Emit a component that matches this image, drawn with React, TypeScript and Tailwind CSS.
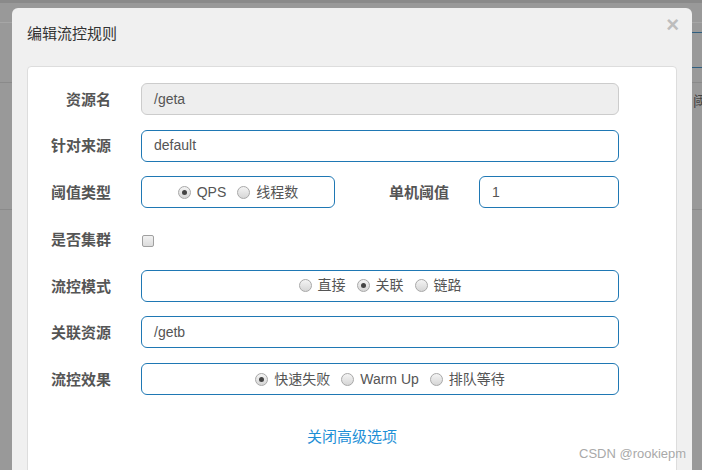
import React from 'react';

const cjk = { fontFamily: '"Liberation Sans", Arial, "Noto Sans CJK SC", sans-serif' };

const Radio = ({ checked }: { checked?: boolean }) => (
  <span className="inline-flex h-[13px] w-[13px] items-center justify-center rounded-full border border-[#a8a8a8] bg-gradient-to-b from-[#f4f4f4] to-[#d6d6d6]">
    {checked && <span className="h-[5px] w-[5px] rounded-full bg-[#444]" />}
  </span>
);

const RadioGroup = ({ items, active }: { items: string[]; active: number }) => (
  <div className="flex items-center gap-[11px] text-[14px] text-[#555]">
    {items.map((t, i) => (
      <label key={t} className="flex items-center gap-[6px]">
        <Radio checked={i === active} />
        <span>{t}</span>
      </label>
    ))}
  </div>
);

const Label = ({ children }: { children: React.ReactNode }) => (
  <div className="w-[83px] shrink-0 translate-y-[1px] text-right text-[15px] font-bold text-[#555]">{children}</div>
);

// input-like box; disabled one is grey
const Box = ({
  children,
  className = '',
  disabled,
}: {
  children?: React.ReactNode;
  className?: string;
  disabled?: boolean;
}) => (
  <div
    className={`flex h-[32px] items-center rounded-[6px] border px-[12px] text-[14px] text-[#555] ${
      disabled ? 'border-[#ccc] bg-[#eeeeee]' : 'border-[#1f78b4] bg-white'
    } ${className}`}
  >
    {children}
  </div>
);

export default function App() {
  return (
    <div className="relative h-[470px] w-[702px] overflow-hidden bg-[#999]" style={cjk}>
      {/* page behind the overlay */}
      <div className="h-[3px] bg-[#8a8a8a]" />
      <div className="absolute left-0 right-0 top-[22px] h-px bg-[#a6a6a6]" />
      <div className="absolute left-0 right-0 top-[82px] h-px bg-[#8a8a8a]" />
      <div className="absolute left-0 right-0 top-[209px] h-px bg-[#8a8a8a]" />
      <div className="absolute right-0 top-[32px] h-px w-[20px] bg-[#2f5f80]" />
      <div className="absolute right-0 top-[67px] h-px w-[20px] bg-[#2f5f80]" />
      <div className="absolute left-[693px] top-[91px] text-[14px] text-[#444]">阈</div>

      {/* modal */}
      <div className="absolute left-[12px] top-[8px] h-[480px] w-[680px] rounded-[6px] bg-[#f0f0f0]">
        <div className="flex h-[58px] items-start px-[15px] pt-[16px]">
          <h4 className="text-[15px] leading-[20px] text-[#333]">编辑流控规则</h4>
        </div>
        <button className="absolute right-[13px] top-[6px] text-[22px] font-bold leading-[22px] text-[#bdbdbd]">×</button>

        <div className="mx-[15px] h-[420px] rounded-[4px] border border-[#ddd] bg-white pt-[16px]">
          <div className="flex flex-col gap-[14.7px]">
            <div className="flex items-center gap-[30px]">
              <Label>资源名</Label>
              <Box disabled className="w-[478px]">/geta</Box>
            </div>
            <div className="flex items-center gap-[30px]">
              <Label>针对来源</Label>
              <Box className="w-[478px]">default</Box>
            </div>
            <div className="flex items-center">
              <Label>阈值类型</Label>
              <Box className="ml-[30px] w-[194px] justify-center">
                <RadioGroup items={['QPS', '线程数']} active={0} />
              </Box>
              <div className="ml-[31px]">
                <Label>单机阈值</Label>
              </div>
              <Box className="ml-[30px] w-[140px]">1</Box>
            </div>
            <div className="flex h-[32px] items-center gap-[31px]">
              <Label>是否集群</Label>
              <span className="h-[12px] w-[12px] translate-y-[2px] rounded-[2px] border border-[#a0a0a0] bg-gradient-to-b from-[#f2f2f2] to-[#dcdcdc]" />
            </div>
            <div className="flex items-center gap-[30px]">
              <Label>流控模式</Label>
              <Box className="w-[478px] justify-center">
                <RadioGroup items={['直接', '关联', '链路']} active={1} />
              </Box>
            </div>
            <div className="flex items-center gap-[30px]">
              <Label>关联资源</Label>
              <Box className="w-[478px]">/getb</Box>
            </div>
            <div className="flex items-center gap-[30px]">
              <Label>流控效果</Label>
              <Box className="w-[478px] justify-center">
                <RadioGroup items={['快速失败', 'Warm Up', '排队等待']} active={0} />
              </Box>
            </div>
          </div>
          <div className="mt-[30px] text-center">
            <a className="cursor-pointer text-[15px] leading-[20px] text-[#1e8fd6]">关闭高级选项</a>
          </div>
        </div>
      </div>

      <div className="absolute left-[579px] top-[444px] text-[13px] text-[#a9a9a9] [text-shadow:0_0_2px_#fff]">
        CSDN @rookiepm
      </div>
    </div>
  );
}
